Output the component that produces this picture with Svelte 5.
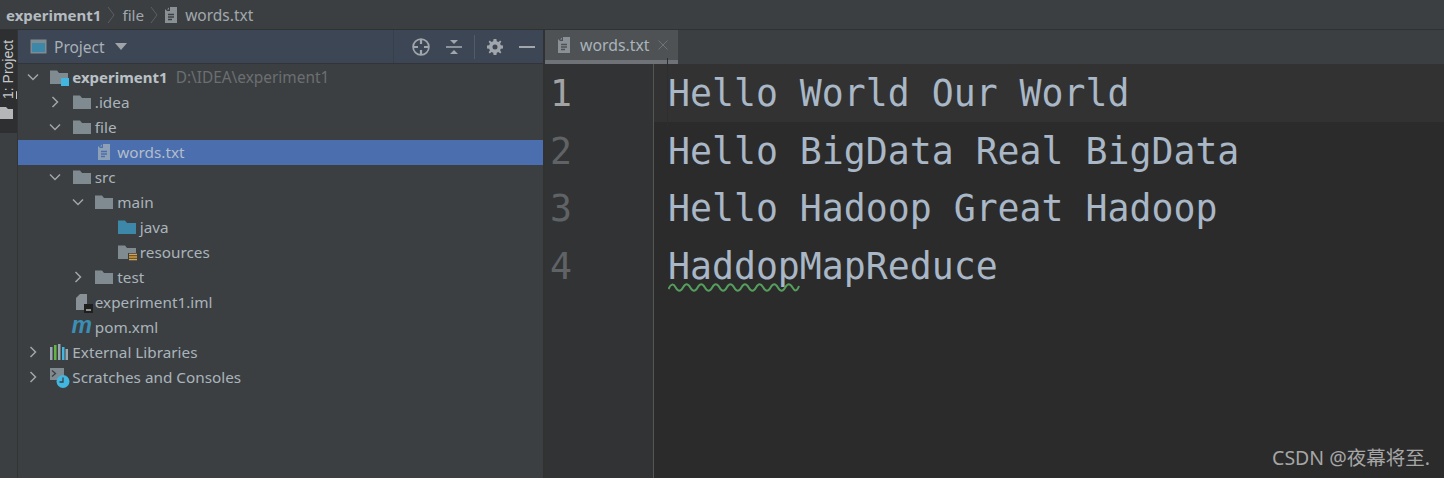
<script>
  const tree = [
    { level: 0, arrow: 'down', icon: 'module', name: 'experiment1', bold: true, hint: 'D:\\IDEA\\experiment1' },
    { level: 1, arrow: 'right', icon: 'folder', name: '.idea' },
    { level: 1, arrow: 'down', icon: 'folder', name: 'file' },
    { level: 2, icon: 'text', name: 'words.txt', selected: true },
    { level: 1, arrow: 'down', icon: 'folder', name: 'src' },
    { level: 2, arrow: 'down', icon: 'folder', name: 'main' },
    { level: 3, icon: 'java', name: 'java' },
    { level: 3, icon: 'resources', name: 'resources' },
    { level: 2, arrow: 'right', icon: 'folder', name: 'test' },
    { level: 1, icon: 'iml', name: 'experiment1.iml' },
    { level: 1, icon: 'maven', name: 'pom.xml' },
    { level: 0, arrow: 'right', icon: 'libs', name: 'External Libraries' },
    { level: 0, arrow: 'right', icon: 'scratch', name: 'Scratches and Consoles' }
  ]

  const lines = ['Hello World Our World', 'Hello BigData Real BigData', 'Hello Hadoop Great Hadoop', 'HaddopMapReduce']
</script>

{#snippet fileIcon(fill, lines)}
  <svg width="14" height="18" viewBox="0 0 14 18">
    <path d="M1 3 L1 17 L13 17 L13 1 L6 1 L6 5 L3 5 Z M3 3.5 L5 1.5 L5 3.5 Z" fill={fill} />
    <path d="M4 8.5h6M4 11h6M4 13.5h4" stroke={lines} stroke-width="1.3" />
  </svg>
{/snippet}

{#snippet folder(fill)}
  <svg width="18" height="14" viewBox="0 0 18 14">
    <path d="M0 0.5 H7 L9 3 H18 V14 H0 Z" fill={fill} />
  </svg>
{/snippet}

<div class="window">
  <nav class="crumbs">
    <b>experiment1</b>
    <svg class="sep" width="10" height="20" viewBox="0 0 10 20"><path d="M2 2 L8 10 L2 18" /></svg>
    <span class="crumb-dir">file</span>
    <svg class="sep" width="10" height="20" viewBox="0 0 10 20"><path d="M2 2 L8 10 L2 18" /></svg>
    {@render fileIcon('#8a9196', '#3c3f41')}
    <span class="crumb-file">words.txt</span>
  </nav>

  <div class="main">
    <aside class="strip">
      <div class="strip-tab">
        <span><u>1</u>: Project</span>
        <svg class="strip-folder" width="13" height="12" viewBox="0 0 13 12"><path d="M0 0 H6 L8 2 H13 V12 H0 Z" /></svg>
      </div>
    </aside>

    <section class="project">
      <header class="project-head">
        <svg class="window-icon" width="17" height="15" viewBox="0 0 17 15">
          <rect x="0.5" y="0.5" width="16" height="14" fill="#7f8b91" />
          <rect x="2" y="4" width="13" height="9" fill="#3d87a8" />
        </svg>
        <span class="project-title">Project</span>
        <svg class="caret" width="12" height="7" viewBox="0 0 12 7"><path d="M0 0 H12 L6 7 Z" /></svg>
        <span class="spacer"></span>
        <span class="divider"></span>
        <svg class="tool" width="18" height="18" viewBox="0 0 18 18">
          <circle cx="9" cy="9" r="7.9" fill="none" stroke-width="1.7" />
          <path d="M9 1.5V6M9 12V16.5M1.5 9H6M12 9H16.5" stroke-width="2.2" />
        </svg>
        <svg class="tool collapse" width="16" height="16" viewBox="0 0 16 16">
          <path class="flat" d="M0 8H16" stroke-width="1.6" />
          <path class="solid" d="M4 1H12L8 5ZM4 15H12L8 11Z" />
        </svg>
        <span class="divider tall"></span>
        <svg class="tool gear" width="16" height="16" viewBox="0 0 16 16">
          <path class="solid" fill-rule="evenodd" d="M6.6 0H9.4L9.8 2.2L11.4 2.9L13.2 1.6L14.4 2.8L13.1 4.6L13.8 6.2L16 6.6V9.4L13.8 9.8L13.1 11.4L14.4 13.2L13.2 14.4L11.4 13.1L9.8 13.8L9.4 16H6.6L6.2 13.8L4.6 13.1L2.8 14.4L1.6 13.2L2.9 11.4L2.2 9.8L0 9.4V6.6L2.2 6.2L2.9 4.6L1.6 2.8L2.8 1.6L4.6 2.9L6.2 2.2ZM8 5.5A2.5 2.5 0 1 0 8 10.5A2.5 2.5 0 1 0 8 5.5Z" />
        </svg>
        <svg class="tool minimize" width="16" height="4" viewBox="0 0 16 4"><path d="M0 2H16" stroke-width="2" /></svg>
      </header>

      <ul class="tree">
        {#each tree as row}
          <li class="row" class:selected={row.selected} style="padding-left: {8.3 + row.level * 22.5}px">
            <span class="arrow">
              {#if row.arrow === 'down'}
                <svg width="12" height="8" viewBox="0 0 12 8"><path d="M1 1.5 L6 6.5 L11 1.5" /></svg>
              {:else if row.arrow === 'right'}
                <svg width="8" height="12" viewBox="0 0 8 12"><path d="M1.5 1 L6.5 6 L1.5 11" /></svg>
              {/if}
            </span>
            <span class="icon">
              {#if row.icon === 'folder'}
                {@render folder('#7f8b91')}
              {:else if row.icon === 'java'}
                {@render folder('#3d87a8')}
              {:else if row.icon === 'resources'}
                {@render folder('#7f8b91')}
                <svg class="badge" width="9" height="8" viewBox="0 0 9 8">
                  <rect width="9" height="8" fill="#3c3f41" />
                  <path d="M1 1.5H9M1 4H9M1 6.5H9" stroke="#d9a343" stroke-width="1.3" />
                </svg>
              {:else if row.icon === 'module'}
                {@render folder('#7f8b91')}
                <svg class="badge" width="8" height="8" viewBox="0 0 8 8"><rect width="8" height="8" fill="#40b6e0" /></svg>
              {:else if row.icon === 'text'}
                {@render fileIcon('#8ea0b5', '#4b6eaf')}
              {:else if row.icon === 'iml'}
                <svg width="14" height="18" viewBox="0 0 14 18"><path d="M1 5 L5 1 H12 V17 H1 Z" fill="#8a9196" /></svg>
                <svg class="badge dark" width="9" height="9" viewBox="0 0 9 9">
                  <rect width="9" height="9" fill="#1f1f1f" />
                  <path d="M2 6H7" stroke="#cfcfcf" stroke-width="1.3" />
                </svg>
              {:else if row.icon === 'maven'}
                <span class="maven">m</span>
              {:else if row.icon === 'libs'}
                <svg width="18" height="16" viewBox="0 0 18 16">
                  <rect x="0" y="3" width="2.5" height="13" fill="#9aa7b0" />
                  <rect x="4" y="1" width="2.5" height="15" fill="#62b543" />
                  <rect x="8" y="0" width="2.5" height="16" fill="#9aa7b0" />
                  <rect x="12" y="3" width="2.5" height="13" fill="#40b6e0" />
                  <rect x="15.5" y="5" width="2.5" height="11" fill="#9aa7b0" />
                </svg>
              {:else if row.icon === 'scratch'}
                <svg class="scratch" width="20" height="21" viewBox="0 0 20 21">
                  <rect x="0" y="0" width="14" height="12" fill="#7f8b91" />
                  <path d="M2 2.5L5.5 5.5L2 8.5" fill="none" stroke="#3c3f41" stroke-width="1.3" />
                  <circle cx="13" cy="13.5" r="6.5" fill="#40b6e0" />
                  <path d="M13 9.5V14H9.5" fill="none" stroke="#3c3f41" stroke-width="1.3" />
                </svg>
              {/if}
            </span>
            <span class="name" class:bold={row.bold}>{row.name}</span>
            {#if row.hint}<span class="hint">{row.hint}</span>{/if}
          </li>
        {/each}
      </ul>
    </section>

    <section class="editor">
      <div class="tabs">
        <div class="tab">
          {@render fileIcon('#8a9196', '#4e5254')}
          <span>words.txt</span>
          <svg class="close" width="10" height="10" viewBox="0 0 10 10"><path d="M0.5 0.5L9.5 9.5M9.5 0.5L0.5 9.5" /></svg>
        </div>
      </div>
      <div class="code">
        {#each lines as line, i}
          <div class="line" class:current={i === 0}>
            <span class="num">{i + 1}</span>
            <span class="text">
              {#if i === 3}
                <span class="typo">Haddop<svg class="squiggle" width="132" height="9" viewBox="0 0 132 9"><path d="M0.5 6 Q4 -2 7.7 4.5 T15 4.5 T22.3 4.5 T29.6 4.5 T36.9 4.5 T44.2 4.5 T51.5 4.5 T58.8 4.5 T66.1 4.5 T73.4 4.5 T80.7 4.5 T88 4.5 T95.3 4.5 T102.6 4.5 T109.9 4.5 T117.2 4.5 T124.5 4.5 T131 3" /></svg></span>MapReduce
              {:else}
                {line}
              {/if}
            </span>
          </div>
        {/each}
        <div class="rest"><span class="gutter-fill"></span></div>
      </div>
      <div class="watermark">CSDN @夜幕将至.</div>
    </section>
  </div>
</div>

<style>
  :global(body) { background: #3c3f41; }

  .window {
    width: 1444px; height: 478px; overflow: hidden;
    display: flex; flex-direction: column;
    background: #3c3f41; color: #a9b7c6;
    font-family: "Noto Sans", "Open Sans", sans-serif;
    font-size: 15.3px;
  }

  .crumbs {
    height: 29px; flex: none; box-sizing: content-box;
    display: flex; align-items: center; gap: 5px;
    padding: 0 0 0 6px;
    border-bottom: 1px solid #2f3133;
    color: #a0a8ae;
  }
  .crumbs b { font-weight: 700; font-size: 15px; color: #b4bcc2; }
  .sep { fill: none; stroke: #5b5f62; stroke-width: 1; }
  .crumb-dir { margin-left: 1px; }
  .crumb-file { margin-left: 2px; font-size: 15.5px; }

  .main { flex: 1; display: flex; min-height: 0; }

  .strip {
    width: 18px; flex: none; box-sizing: border-box;
    background: #3c3f41;
    border-right: 1px solid #323436;
  }
  .strip-tab {
    width: 17px; height: 103px;
    background: #2d2f30;
    display: flex; flex-direction: column; align-items: flex-start;
  }
  .strip-tab span {
    writing-mode: vertical-rl; transform: rotate(180deg);
    margin-top: 10px; height: 59px; line-height: 16px;
    font-family: "Liberation Sans", sans-serif;
    font-size: 14px; color: #c4c8cb; white-space: nowrap;
  }
  .strip-folder { fill: #b4b6b8; margin-top: 8px; flex: none; }

  .project { width: 525px; flex: none; display: flex; flex-direction: column; }
  .project-head {
    height: 34px; flex: none;
    display: flex; align-items: center;
    background: #3c4655;
    border-bottom: 1px solid #323438;
    padding-left: 12px;
    box-sizing: border-box;
  }
  .project-title { margin-left: 7px; font-size: 15.5px; color: #a9b0b6; }
  .caret { fill: #a0a4a8; margin-left: 10px; }
  .spacer { flex: 1; }
  .divider { width: 1px; height: 33px; background: #36404d; margin-right: 18px; }
  .divider.tall { height: 24px; background: #525c69; margin: 0 12px 0 12px; }
  .tool { fill: none; stroke: #a0a6ab; flex: none; }
  .tool .solid { fill: #a0a6ab; stroke: none; }
  .collapse { margin-left: 16px; }
  .minimize { margin-left: 16px; margin-right: 8px; }

  .tree { list-style: none; margin: 1px 0 0; padding: 0; }
  .row {
    height: 25px; display: flex; align-items: center;
    box-sizing: border-box;
    padding-bottom: 1px;
    white-space: nowrap;
    color: #a9b4bc;
  }
  .row.selected { background: #4b6eaf; color: #b3bdc9; }
  .arrow {
    width: 13px; height: 25px; flex: none;
    display: flex; align-items: center; justify-content: center;
  }
  .arrow svg { fill: none; stroke: #a0a6ab; stroke-width: 1.5; }
  .icon {
    position: relative;
    width: 18px; height: 18px; margin-left: 11px; margin-right: 4px; flex: none;
    display: flex; align-items: center; justify-content: center;
  }
  .badge { position: absolute; right: -1px; bottom: 0; }
  .badge.dark { right: -2px; bottom: -2px; }
  .scratch { position: absolute; left: 0; top: 0; }
  .maven {
    font: italic 700 23px/18px "Liberation Sans", sans-serif;
    color: #3b8eb5;
    margin-top: -5px;
  }
  .name.bold { font-weight: 700; font-size: 15px; color: #b9c1c7; }
  .hint { margin-left: 8px; color: #6b6f72; font-size: 15.4px; }

  .editor { position: relative; flex: 1; display: flex; flex-direction: column; min-width: 0; background: #2b2b2b; border-left: 2px solid #323232; }
  .tabs { height: 34px; flex: none; display: flex; background: #3c3f41; }
  .tab {
    width: 133px; box-sizing: border-box;
    display: flex; align-items: center; gap: 9px;
    padding: 0 0 0 12px;
    background: #4e5254;
    border-bottom: 4px solid #6f7377;
    color: #a9b4bc;
    font-size: 15.8px;
  }
  .close { fill: none; stroke: #6f7376; stroke-width: 1; margin-left: 0; }

  .code { flex: 1; display: flex; flex-direction: column; font-family: "DejaVu Sans Mono", monospace; font-size: 36.5px; }
  .line { height: 57.5px; display: flex; align-items: center; white-space: pre; }
  .line.current { background: #323232; }
  .num {
    width: 109px; flex: none; box-sizing: border-box;
    height: 100%; display: flex; align-items: center;
    padding: 2px 0 0 5px;
    background: #313335; color: #606366;
    border-right: 1px solid #555;
  }
  .current .num { color: #a4a3a3; }
  .text { padding: 2px 0 0 14px; }
  .current .text { position: relative; }
  .current .text::before {
    content: ''; position: absolute; left: 13px; top: -12px; bottom: -12px;
    width: 1px; background: #2e2e2e;
  }
  .typo { position: relative; }
  .squiggle {
    position: absolute; left: 0; bottom: -4px;
    fill: none; stroke: #559e5d; stroke-width: 2;
  }
  .rest { flex: 1; display: flex; }
  .gutter-fill { width: 109px; box-sizing: border-box; background: #313335; border-right: 1px solid #555; }

  .watermark {
    position: absolute; right: 14px; bottom: 7px;
    font-family: "Noto Sans", "Noto Sans CJK SC", sans-serif;
    font-size: 19.5px; color: #a6a6a6;
  }
</style>
